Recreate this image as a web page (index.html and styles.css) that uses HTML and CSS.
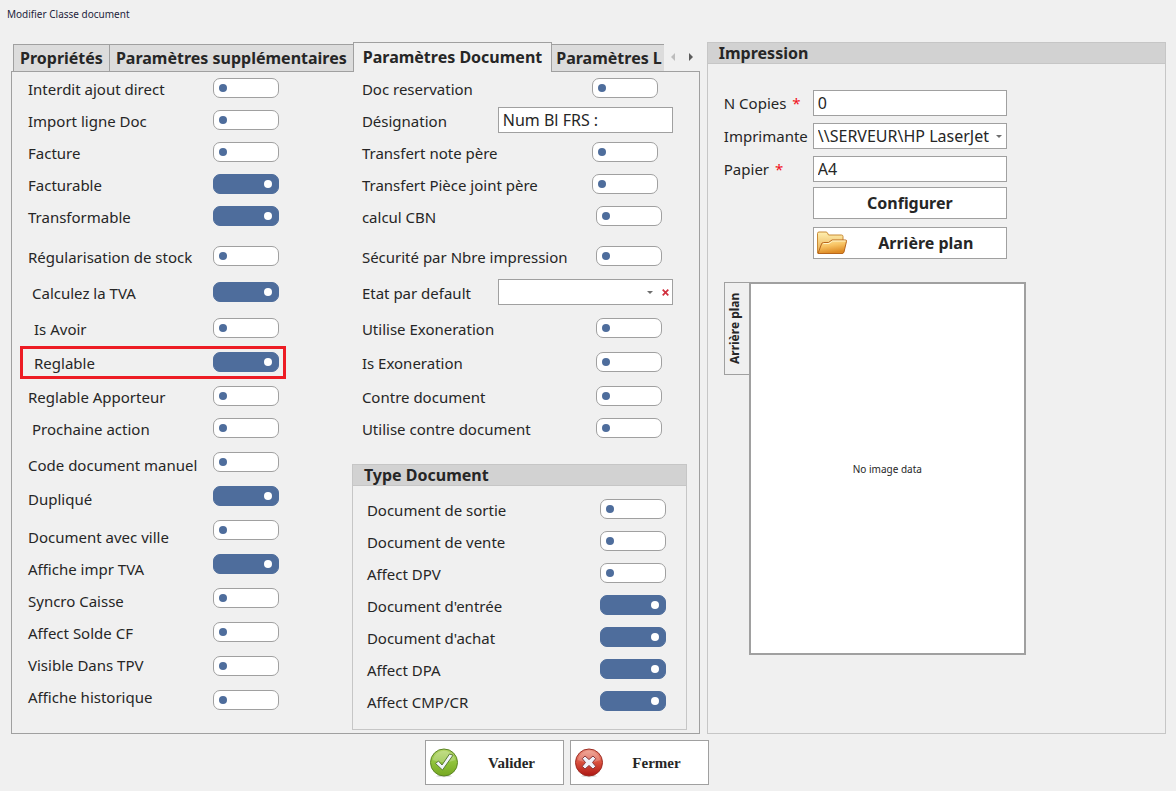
FILE: index.html
```html
<!DOCTYPE html>
<html lang="fr">
<head>
<meta charset="utf-8">
<meta name="viewport" content="width=device-width, initial-scale=1">
<title>Modifier Classe document</title>
<link rel="stylesheet" href="styles.css">
</head>
<body>
<h1 class="window-title">Modifier Classe document</h1>
<form class="window">
  <main class="workspace">
    <section class="notebook">
      <div class="tab-strip">
        <div class="tabs" role="tablist">
          <button type="button" class="tab" role="tab">Propriétés</button>
          <button type="button" class="tab" role="tab">Paramètres supplémentaires</button>
          <button type="button" class="tab active" role="tab" aria-selected="true">Paramètres Document</button>
          <button type="button" class="tab last" role="tab">Paramètres L</button>
        </div>
        <div class="scrollers">
          <button type="button" class="scroller" disabled aria-label="Onglets précédents"><svg width="4" height="8" viewBox="0 0 4 8"><path d="M4 0v8L0 4z" fill="#bdbdbd"/></svg></button>
          <button type="button" class="scroller" aria-label="Onglets suivants"><svg width="4" height="8" viewBox="0 0 4 8"><path d="M0 0v8l4-4z" fill="#5c5c5c"/></svg></button>
        </div>
      </div>
      <div class="tab-panel" role="tabpanel">
        <div class="options">
          <div class="stack labels">
            <label for="a1">Interdit ajout direct</label>
            <label for="a2">Import ligne Doc</label>
            <label for="a3">Facture</label>
            <label for="a4">Facturable</label>
            <label for="a5">Transformable</label>
            <label for="a6" class="gap-20">Régularisation de stock</label>
            <label for="a7" class="gap-16 indent-4">Calculez la TVA</label>
            <label for="a8" class="gap-16 indent-6">Is Avoir</label>
            <label for="a9" class="gap-14 indent-6 marked">Reglable</label>
            <label for="a10" class="gap-14">Reglable Apporteur</label>
            <label for="a11" class="indent-4">Prochaine action</label>
            <label for="a12" class="gap-16">Code document manuel</label>
            <label for="a13" class="gap-14">Dupliqué</label>
            <label for="a14" class="gap-18">Document avec ville</label>
            <label for="a15">Affiche impr TVA</label>
            <label for="a16">Syncro Caisse</label>
            <label for="a17">Affect Solde CF</label>
            <label for="a18">Visible Dans TPV</label>
            <label for="a19">Affiche historique</label>
          </div>
          <div class="stack">
            <input type="checkbox" class="switch" id="a1">
            <input type="checkbox" class="switch" id="a2">
            <input type="checkbox" class="switch" id="a3">
            <input type="checkbox" class="switch" id="a4" checked>
            <input type="checkbox" class="switch" id="a5" checked>
            <input type="checkbox" class="switch gap-20" id="a6">
            <input type="checkbox" class="switch gap-16" id="a7" checked>
            <input type="checkbox" class="switch gap-16" id="a8">
            <input type="checkbox" class="switch gap-14" id="a9" checked>
            <input type="checkbox" class="switch gap-14" id="a10">
            <input type="checkbox" class="switch" id="a11">
            <input type="checkbox" class="switch gap-14" id="a12">
            <input type="checkbox" class="switch gap-14" id="a13" checked>
            <input type="checkbox" class="switch gap-14" id="a14">
            <input type="checkbox" class="switch gap-14" id="a15" checked>
            <input type="checkbox" class="switch gap-14" id="a16">
            <input type="checkbox" class="switch gap-14" id="a17">
            <input type="checkbox" class="switch gap-14" id="a18">
            <input type="checkbox" class="switch gap-14" id="a19">
          </div>
        </div>
        <div class="details">
          <div class="stack rows">
            <div class="row short"><label for="b1">Doc reservation</label><input type="checkbox" class="switch" id="b1"></div>
            <div class="row wide"><label for="b2">Désignation</label><input type="text" class="field" id="b2" value="Num Bl FRS :"></div>
            <div class="row short"><label for="b3">Transfert note père</label><input type="checkbox" class="switch" id="b3"></div>
            <div class="row short"><label for="b4">Transfert Pièce joint père</label><input type="checkbox" class="switch" id="b4"></div>
            <div class="row"><label for="b5">calcul CBN</label><input type="checkbox" class="switch" id="b5"></div>
            <div class="row gap-20"><label for="b6">Sécurité par Nbre impression</label><input type="checkbox" class="switch" id="b6"></div>
            <div class="row wide gap-16"><label for="b7">Etat par default</label>
              <div class="combo">
                <select class="field" id="b7"><option></option></select>
                <svg class="caret inner" width="6" height="3" viewBox="0 0 6 3"><path d="M0 0h6L3 3z" fill="#6e6e6e"/></svg>
                <button type="button" class="clear" aria-label="Effacer"><svg width="7" height="7" viewBox="0 0 7 7"><path d="M.7.7l5.6 5.6M6.3.7L.7 6.3" stroke="#d0303e" stroke-width="1.7"/></svg></button>
              </div>
            </div>
            <div class="row gap-16"><label for="b8">Utilise Exoneration</label><input type="checkbox" class="switch" id="b8"></div>
            <div class="row gap-14"><label for="b9">Is Exoneration</label><input type="checkbox" class="switch" id="b9"></div>
            <div class="row gap-14"><label for="b10">Contre document</label><input type="checkbox" class="switch" id="b10"></div>
            <div class="row"><label for="b11">Utilise contre document</label><input type="checkbox" class="switch" id="b11"></div>
          </div>
          <section class="group type-group">
            <h2 class="group-title">Type Document</h2>
            <div class="stack type-rows">
              <div class="row"><label for="c1">Document de sortie</label><input type="checkbox" class="switch" id="c1"></div>
              <div class="row"><label for="c2">Document de vente</label><input type="checkbox" class="switch" id="c2"></div>
              <div class="row"><label for="c3">Affect DPV</label><input type="checkbox" class="switch" id="c3"></div>
              <div class="row"><label for="c4">Document d'entrée</label><input type="checkbox" class="switch" id="c4" checked></div>
              <div class="row"><label for="c5">Document d'achat</label><input type="checkbox" class="switch" id="c5" checked></div>
              <div class="row"><label for="c6">Affect DPA</label><input type="checkbox" class="switch" id="c6" checked></div>
              <div class="row"><label for="c7">Affect CMP/CR</label><input type="checkbox" class="switch" id="c7" checked></div>
            </div>
          </section>
        </div>
      </div>
    </section>

    <section class="group print-group">
      <h2 class="group-title">Impression</h2>
      <div class="print-body">
        <div class="print-form">
          <label for="p1">N Copies <span class="required">*</span></label>
          <input type="text" class="field" id="p1" value="0">
          <label for="p2">Imprimante</label>
          <div class="combo">
            <select class="field" id="p2"><option>\\SERVEUR\HP LaserJet</option></select>
            <svg class="caret" width="6" height="3" viewBox="0 0 6 3"><path d="M0 0h6L3 3z" fill="#6e6e6e"/></svg>
          </div>
          <label for="p3">Papier <span class="required">*</span></label>
          <input type="text" class="field" id="p3" value="A4">
        </div>
        <div class="print-actions">
          <button type="button" class="button">Configurer</button>
          <button type="button" class="button with-icon">
            <svg width="32" height="24" viewBox="0 0 32 24">
              <defs>
                <linearGradient id="fb" x1="0" y1="0" x2="0" y2="1"><stop offset="0" stop-color="#fff0b0"/><stop offset="1" stop-color="#e8a848"/></linearGradient>
                <linearGradient id="ff" x1="0" y1="0" x2="0.3" y2="1"><stop offset="0" stop-color="#ffe9a0"/><stop offset="0.5" stop-color="#f7c262"/><stop offset="1" stop-color="#dd8a24"/></linearGradient>
              </defs>
              <path d="M.5 22V2.500q0-1.500 1.500-1.500h7q1 0 1.500 1l1 2h13q1.500 0 1.500 1.500V22z" fill="url(#fb)" stroke="#c98a35"/>
              <path d="M1 22.500L4.500 13q.5-1.500 2-1.500h5l3.500-2.500h13.500q1.300 0 1 1.300L27 21q-.5 1.500-2 1.500z" fill="url(#ff)" stroke="#b8661c"/>
              <path d="M6.500 12.500h5.500l3.500-2.500h13" fill="none" stroke="#fff4c8"/>
            </svg>
            <span>Arrière plan</span>
          </button>
        </div>
        <div class="preview">
          <button type="button" class="side-tab">Arrière plan</button>
          <div class="canvas">No image data</div>
        </div>
      </div>
    </section>
  </main>

  <footer class="actions">
    <button type="button" class="action">
      <svg width="30" height="30" viewBox="0 0 30 30">
        <defs><linearGradient id="gg" x1="0" y1="0" x2="0" y2="1"><stop offset="0" stop-color="#b5d66a"/><stop offset="0.500" stop-color="#8fc23a"/><stop offset="1" stop-color="#76a821"/></linearGradient></defs>
        <ellipse cx="15" cy="28" rx="8" ry="1.200" fill="#ddd"/>
        <circle cx="15" cy="14.500" r="13.500" fill="url(#gg)" stroke="#5b8424"/>
        <path d="M3.500 12a11.800 11.800 0 0 1 23 0q-11 4.500-23 0z" fill="#fff" opacity=".22"/>
        <path d="M6.500 15.500l3-2.500 3.500 4L20.500 6l3.500 1.200L13.500 22z" fill="#f2f5fa" stroke="#5a7a38" stroke-linejoin="round"/>
      </svg>
      <span>Valider</span>
    </button>
    <button type="button" class="action">
      <svg width="30" height="30" viewBox="0 0 30 30">
        <defs><linearGradient id="rg" x1="0" y1="0" x2="0" y2="1"><stop offset="0" stop-color="#ee9a88"/><stop offset="0.500" stop-color="#d9503e"/><stop offset="1" stop-color="#ad1512"/></linearGradient></defs>
        <ellipse cx="15" cy="28" rx="8" ry="1.200" fill="#ddd"/>
        <circle cx="15" cy="14.500" r="13.500" fill="url(#rg)" stroke="#9c2b22"/>
        <path d="M3.500 12a11.800 11.800 0 0 1 23 0q-11 4.500-23 0z" fill="#fff" opacity=".2"/>
        <path d="M11 8l4 3.500L19 8l2.700 2.700-3.200 3.800 3.200 3.800L19 21l-4-3.500L11 21l-2.700-2.700 3.200-3.800-3.200-3.800z" fill="#f0f2fa" stroke="#8a3a3c" stroke-linejoin="round"/>
      </svg>
      <span>Fermer</span>
    </button>
  </footer>
</form>
</body>
</html>
```
FILE: styles.css
```css
*, ::before, ::after { box-sizing: border-box; }

body {
  margin: 0;
  min-height: 100vh;
  display: flex;
  flex-direction: column;
  background: #f0f0f0;
  color: #262626;
  font: 15px/20px Tahoma, "Noto Sans", sans-serif;
}

button, input, select { font: inherit; color: inherit; margin: 0; }
button { cursor: pointer; }

.window-title {
  margin: 0;
  padding: 4px 7px 18px;
  font-size: 10px;
  font-weight: 400;
  color: #1e1e3c;
}

.window { flex: 1; display: flex; flex-direction: column; }

.workspace {
  flex: 1;
  display: grid;
  grid-template-columns: minmax(0, 3fr) minmax(0, 2fr);
  gap: 7px;
  padding: 0 10px 0 11px;
}

/* Tabs */
.notebook { display: flex; flex-direction: column; }
.tab-strip { display: flex; height: 30px; padding-left: 2px; margin-bottom: -1px; z-index: 1; }
.tabs { flex: 1; min-width: 0; display: flex; align-items: flex-end; overflow: hidden; }
.tab {
  flex: none;
  height: 28px;
  padding: 0 6px;
  border: 1px solid #a0a0a0;
  border-right-width: 0;
  background: #dcdcdc;
  font-size: 16px;
  font-weight: 700;
  white-space: nowrap;
}
.tab.active { height: 30px; padding: 0 9px 2px; border-width: 1px 1px 0; background: #f0f0f0; }
.tab.last { flex: 1; padding: 0 4px; border-left: 0; text-align: left; }
.scrollers { display: flex; align-items: center; gap: 8px; width: 36px; padding-left: 4px; }
.scroller { display: flex; justify-content: center; width: 10px; padding: 0; border: 0; background: none; }

.tab-panel {
  flex: 1;
  display: grid;
  grid-template-columns: minmax(0, 312fr) minmax(0, 335fr);
  gap: 12px;
  padding: 6px 12px 3px 16px;
  border: 1px solid #a0a0a0;
}

/* Option lists */
.stack { display: flex; flex-direction: column; }
.stack > * + * { margin-top: 12px; }
.stack > .gap-14 { margin-top: 14px; }
.stack > .gap-16 { margin-top: 16px; }
.stack > .gap-18 { margin-top: 18px; }
.stack > .gap-20 { margin-top: 20px; }
.indent-4 { padding-left: 4px; }
.indent-6 { padding-left: 6px; }

.options { display: grid; grid-template-columns: 185px 66px; align-items: start; }
.labels { padding-top: 1px; white-space: nowrap; }

.marked { position: relative; }
.marked::after {
  content: "";
  position: absolute;
  top: -7px;
  left: -8px;
  width: 266px;
  height: 33px;
  border: 3px solid #ed1c24;
  pointer-events: none;
}

.rows { padding-left: 10px; }
.row { display: flex; align-items: center; height: 20px; padding-right: 25px; }
.row.short { padding-right: 29px; }
.row.wide { padding-right: 14px; }
.row label { flex: 1; padding-top: 2px; white-space: nowrap; }
.row.wide .field { width: 175px; }

.switch {
  appearance: none;
  flex: none;
  display: flex;
  align-items: center;
  width: 66px;
  height: 20px;
  padding: 0 5px;
  border: 1px solid #a0a0a0;
  border-radius: 7px;
  background: #fff;
}
.switch::before { content: ""; width: 8px; height: 8px; border-radius: 50%; background: #4e6d9c; }
.switch:checked { justify-content: flex-end; padding-right: 6px; border-color: #4e6d9c; background: #4e6d9c; }
.switch:checked::before { background: #fff; }

.field {
  appearance: none;
  width: 100%;
  height: 26px;
  padding: 0 4px;
  border: 1px solid #a0a0a0;
  border-radius: 0;
  background: #fff;
  font-size: 16px;
}
.combo { position: relative; display: flex; }
.caret { position: absolute; top: 12px; right: 5px; pointer-events: none; }
.caret.inner { right: 20px; }
.clear { position: absolute; top: 10px; right: 4px; display: flex; padding: 0; border: 0; background: none; }

/* Group boxes */
.group { border: 1px solid #c6c6c6; }
.group-title {
  margin: 0;
  padding: 0 11px;
  border-bottom: 1px solid #c6c6c6;
  background: #d2d2d2;
  font-size: 16px;
  line-height: 20px;
}
.type-group { margin-top: 26px; }
.type-rows { padding: 13px 20px 18px 14px; }
.type-rows .row { padding-right: 0; }

/* Printing */
.print-body { padding: 26px 16px; }
.print-form { display: grid; grid-template-columns: 89px 194px; row-gap: 7px; align-items: center; white-space: nowrap; }
.required { padding-left: 2px; color: #f01020; }
.print-actions { display: grid; gap: 8px; width: 194px; margin: 5px 0 0 89px; }
.button {
  height: 32px;
  padding: 0 3px;
  border: 1px solid #a0a0a0;
  background: #fff;
  font-size: 16px;
  font-weight: 700;
}
.with-icon { display: flex; align-items: center; }
.with-icon span { flex: 1; }

.preview { display: flex; align-items: flex-start; width: 302px; margin-top: 23px; }
.side-tab {
  width: 26px;
  height: 93px;
  margin-right: -1px;
  padding: 0 0 0 4px;
  border: 1px solid #a0a0a0;
  background: #f0f0f0;
  font-size: 12px;
  font-weight: 700;
  line-height: 20px;
  writing-mode: vertical-rl;
  transform: rotate(180deg);
}
.canvas {
  flex: 1;
  display: flex;
  align-items: center;
  justify-content: center;
  height: 373px;
  border: 2px solid #a0a0a0;
  background: #fff;
  font-size: 10px;
}

/* Dialog buttons */
.actions { display: flex; justify-content: center; gap: 6px; padding: 6px 42px 6px 0; }
.action {
  display: flex;
  align-items: center;
  width: 139px;
  height: 45px;
  padding: 0 3px;
  border: 1px solid #a0a0a0;
  background: #fff;
  font: 700 15px/20px "Liberation Serif", serif;
}
.action span { flex: 1; padding-left: 4px; }
```
